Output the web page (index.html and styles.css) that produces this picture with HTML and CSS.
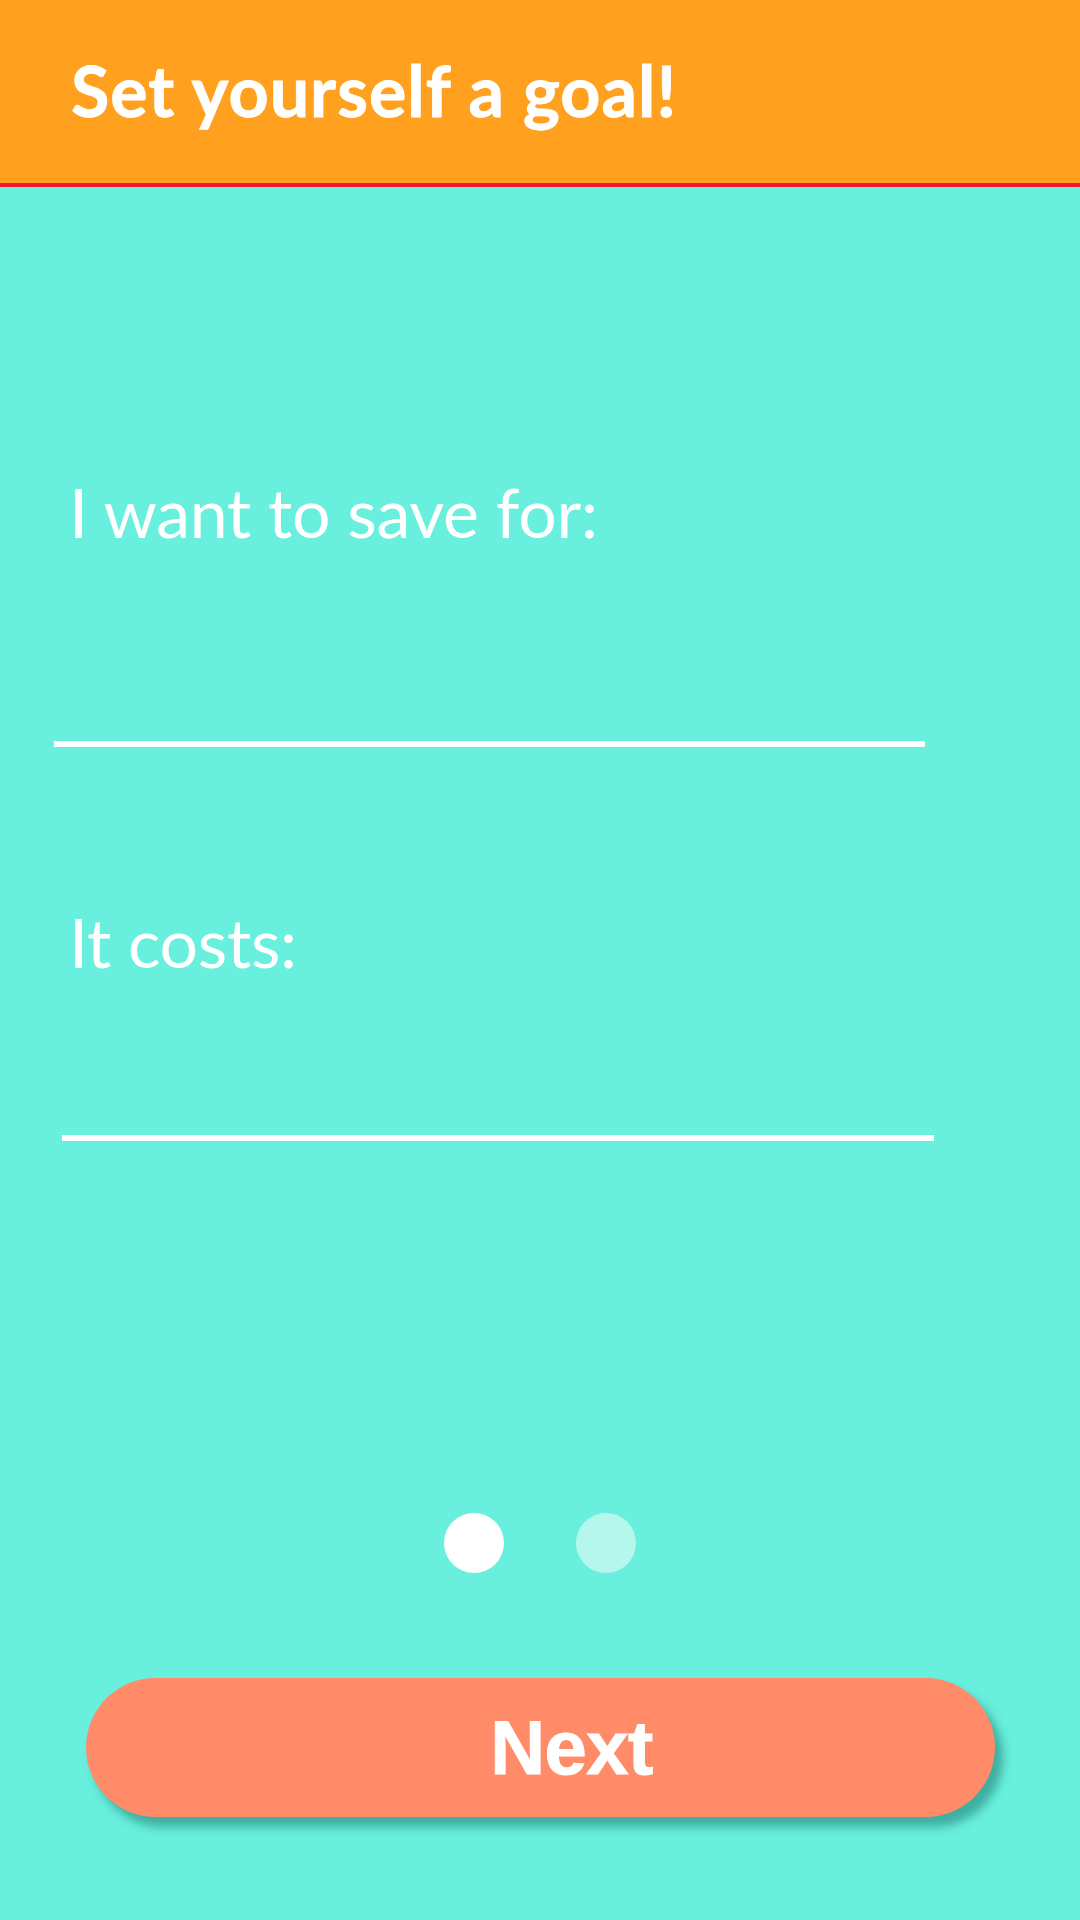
FILE: index.html
```html
<!DOCTYPE html>
<html lang="en">
<head>
<meta charset="utf-8">
<title>Set yourself a goal!</title>
<link rel="stylesheet" href="styles.css">
</head>
<body>
<header class="topbar">
  <h1 class="title">Set yourself a goal!</h1>
</header>
<main class="content">
  <label class="field-label first">I want to save for:</label>
  <div class="field-line line-one"></div>
  <label class="field-label second">It costs:</label>
  <div class="field-line line-two"></div>
  <div class="pager">
    <span class="dot active"></span>
    <span class="dot"></span>
  </div>
  <button class="next-btn">Next</button>
</main>
</body>
</html>
```
FILE: styles.css
```css
html, body {
  margin: 0;
  padding: 0;
}
body {
  width: 1080px;
  height: 1920px;
  background: #68efdd;
  overflow: hidden;
}
.topbar {
  box-sizing: border-box;
  height: 187px;
  background: #ffa01f;
  border-bottom: 4px solid #f2172c;
  padding: 55px 0 0 71px;
}
.title {
  margin: 0;
  font-family: Lato, "Open Sans", sans-serif;
  font-weight: 700;
  font-size: 70px;
  line-height: 1;
  color: #fff;
  letter-spacing: 1px;
  -webkit-text-stroke: 0.8px #fff;
}
.content {
  display: flex;
  flex-direction: column;
}
.field-label {
  display: block;
  font-family: Lato, "Open Sans", sans-serif;
  font-weight: 400;
  font-size: 68px;
  line-height: 1;
  color: #fff;
  margin-left: 69px;
  letter-spacing: -0.3px;
}
.field-label.first {
  margin-top: 291px;
}
.field-label.second {
  margin-top: 161px;
}
.field-line {
  height: 6px;
  background: #fff;
}
.line-one {
  margin-top: 195px;
  margin-left: 54px;
  width: 871px;
}
.line-two {
  margin-top: 159px;
  margin-left: 62px;
  width: 872px;
}
.pager {
  margin-top: 372px;
  display: flex;
  justify-content: center;
  gap: 72px;
}
.dot {
  width: 60px;
  height: 60px;
  border-radius: 50%;
  background: #b5f6ed;
}
.dot.active {
  background: #fff;
}
.next-btn {
  margin-top: 105px;
  margin-left: 86px;
  width: 909px;
  height: 139px;
  border: none;
  border-radius: 70px;
  background: #ff8b68;
  box-shadow: 8px 10px 10px rgba(30, 120, 110, 0.55);
  color: #fff;
  font-family: "Liberation Sans", Arial, sans-serif;
  font-weight: 700;
  font-size: 76px;
  line-height: 1;
  padding: 0 0 0 62px;
  letter-spacing: -0.5px;
  -webkit-text-stroke: 1px #fff;
}
```
